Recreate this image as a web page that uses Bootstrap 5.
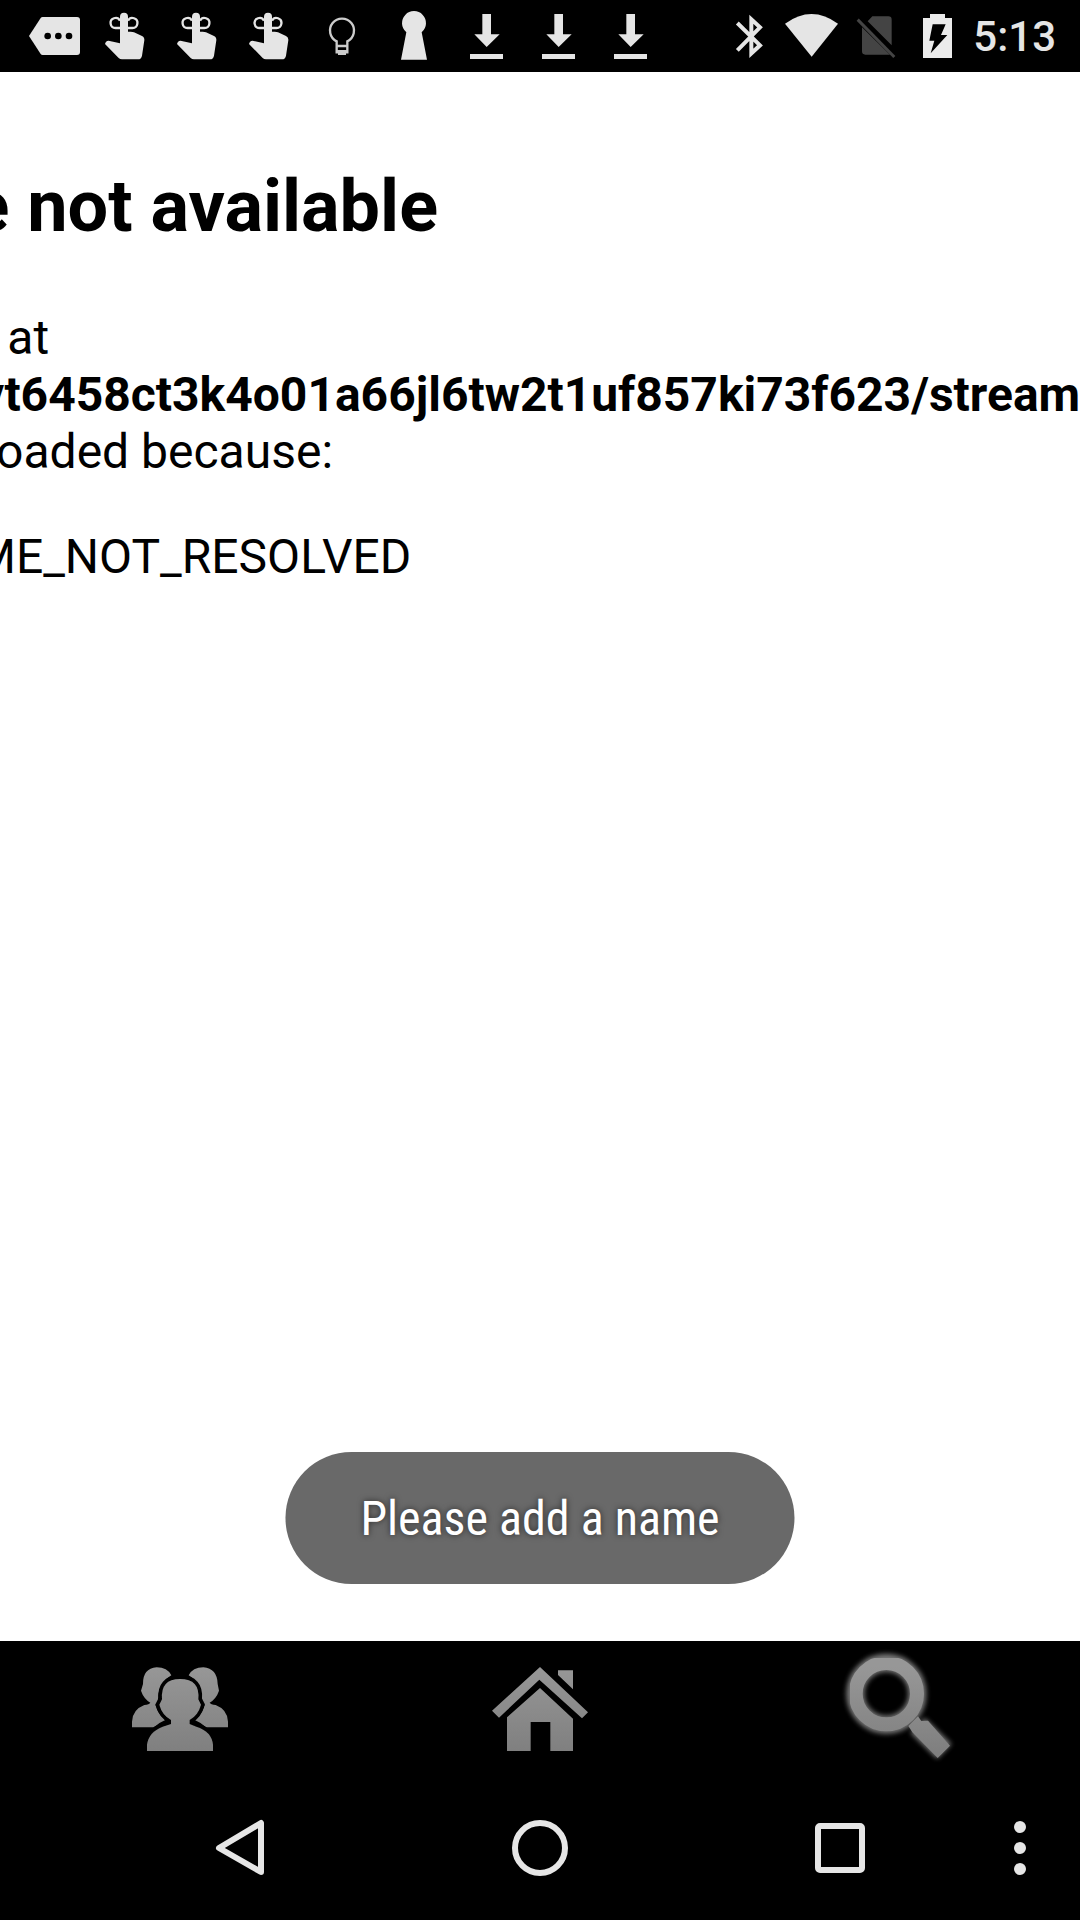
<!DOCTYPE html>
<html lang="en">
<head>
<meta charset="utf-8">
<meta name="viewport" content="width=device-width, initial-scale=1">
<title>Webpage not available</title>
<link href="https://cdn.jsdelivr.net/npm/bootstrap@5.3.0/dist/css/bootstrap.min.css" rel="stylesheet">
<style>
body { font-family: Roboto, sans-serif; color: #000; background: #fff; }
svg { display: block; flex: none; }
.status-bar { height: 72px; padding: 0 24px 0 18px; color: #e5e5e5; }
.status-time { font-size: 42px; line-height: 72px; padding-top: 2px; font-weight: 500; margin-left: 6px; }
.web-view { padding-top: 93px; }
/* the page is panned sideways, so its start lies left of the window */
.web-page { margin-left: -291px; white-space: nowrap; font-size: 48px; line-height: 57px; }
.web-page h1 { font-size: 72px; line-height: 84px; font-weight: 700; margin: 0 0 60px; }
.web-page p { margin: 0 0 48px; }
.toast-pill { bottom: 57px; height: 132px; padding: 2px 75px 0; background: #696969; font-family: "Roboto Condensed", Roboto, sans-serif; font-size: 48px; text-shadow: 0 0 6px rgba(0,0,0,.6); }
.tab-strip { height: 135px; }
.key-strip { height: 144px; color: #e6e6e6; padding: 0 30px 0 90px; }
.key-strip .key { flex: 1 1 0; }
.key-strip .key-menu { width: 60px; }
</style>
</head>
<body>
<svg width="0" height="0" class="position-absolute" aria-hidden="true">
  <defs>
    <linearGradient id="steel" gradientUnits="userSpaceOnUse" x1="0" y1="110" x2="0" y2="370"><stop offset="0" stop-color="#979797"/><stop offset="1" stop-color="#7f7f7f"/></linearGradient>
    <filter id="glow" x="-20%" y="-20%" width="140%" height="140%"><feGaussianBlur stdDeviation="8"/></filter>
    <filter id="soft" x="-5%" y="-5%" width="110%" height="110%"><feGaussianBlur stdDeviation="1.5"/></filter>
    <symbol id="touch" viewBox="0 0 216 216">
      <path fill="currentColor" d="M90 130V50q0-12 12-12t12 12v45h8q6 0 10 2l24 11q8 4 7 13l-7 46q-2 11-12 11H96q-6 0-10-4l-41-42q4-12 14-9z"/>
      <g fill="none" stroke="currentColor" stroke-width="7"><path d="M90 84H77a15 15 0 1 1 13-22M114 84h13a15 15 0 1 0-13-22"/></g>
    </symbol>
    <symbol id="download" viewBox="0 0 216 216">
      <path fill="currentColor" d="M97 42h26v61h26l-39 38-37-38h24zM60 162h99v15H60z"/>
    </symbol>
  </defs>
</svg>
<div class="d-flex flex-column min-vh-100">
  <header class="status-bar bg-black d-flex align-items-center">
    <svg width="72" height="72" viewBox="54 0 216 216"><path fill="currentColor" d="M122 54q2-3 6-3h103q9 0 9 9v96q0 9-9 9H128q-4 0-6-3L87 108z"/><g fill="#000"><circle cx="143" cy="108" r="10"/><circle cx="175" cy="108" r="10"/><circle cx="207" cy="108" r="10"/></g></svg>
    <svg width="72" height="72"><use href="#touch"/></svg>
    <svg width="72" height="72"><use href="#touch"/></svg>
    <svg width="72" height="72"><use href="#touch"/></svg>
    <svg width="72" height="72" viewBox="918 0 216 216"><path fill="none" stroke="#ccc" stroke-width="7" d="M1010 157v-33a36 36 0 1 1 32 0v33zM1010 138h32"/><path fill="#ccc" d="M1008 150h36v8h-6v7h-24v-7h-6z"/></svg>
    <svg width="72" height="72" viewBox="54 0 216 216"><path fill="currentColor" d="M139 97a36 36 0 1 1 46 0l16 82h-78z"/></svg>
    <svg width="72" height="72"><use href="#download"/></svg>
    <svg width="72" height="72"><use href="#download"/></svg>
    <svg width="72" height="72"><use href="#download"/></svg>
    <svg class="ms-auto" width="43" height="72" viewBox="30 0 129 216"><path fill="none" stroke="currentColor" stroke-width="12" d="M52 69l68 67-26 24V58l26 24-68 69"/></svg>
    <svg width="75" height="72" viewBox="159 0 225 216"><path fill="currentColor" d="M195 71q80-58 159 0l-79 99z"/></svg>
    <svg width="59" height="72" viewBox="384 0 177 216"><path fill="#444" d="M443 64l14-15h48q10 0 10 10v77zM426 82l84 82h-74q-10 0-10-10z"/><path stroke="#444" stroke-width="9" d="M413 59l110 112"/></svg>
    <svg width="60" height="72" viewBox="561 0 180 216"><path fill="#ebebeb" d="M609 54h21V42h45v12h21v120h-87z"/><path fill="#000" d="M638 73h39l-14 32h19l-50 55 11-38h-15z"/></svg>
    <time class="status-time">5:13</time>
  </header>

  <main class="web-view flex-grow-1 position-relative overflow-hidden">
    <article class="web-page">
      <h1>Webpage not available</h1>
      <p>The webpage at<br><strong>http://www.zvt6458ct3k4o01a66jl6tw2t1uf857ki73f623/stream</strong><br>could not be loaded because:</p>
      <p>net::ERR_NAME_NOT_RESOLVED</p>
    </article>
    <div class="toast-pill position-absolute start-50 translate-middle-x rounded-pill text-white text-nowrap d-flex align-items-center" role="status">Please add a name</div>
  </main>

  <nav class="tab-strip bg-black d-flex" aria-label="Sections">
    <a href="#people" class="flex-fill d-flex justify-content-center" aria-label="People">
      <svg width="140" height="135" viewBox="0 33 420 405"><g filter="url(#soft)"><g fill="url(#steel)"><path d="M184 136q-12-24-44-24-42 4-41 50l-6 20q8 24 28 36-3 5-18 7-36 14-37 50v17h66q14-14 34-22l-5-6q-17-13-25-40l9-8q-5-52 39-80z"/><path d="M236 136q12-24 44-24 42 4 43 50l4 20q-8 24-28 36 3 5 18 7 36 14 37 50v17h-66q-14-14-34-22l5-6q17-13 25-40l-9-8q5-52-39-80z"/></g><path fill="url(#steel)" stroke="#000" stroke-width="22" paint-order="stroke" d="M156 208q-5-61 54-61 61 0 55 61l8 16q-8 31-34 46v12l20 8q46 14 50 54v19H111v-19q5-38 47-54l25-8v-12q-27-15-35-46z"/></g></svg>
    </a>
    <a href="#home" class="flex-fill d-flex justify-content-center" aria-label="Home">
      <svg width="140" height="135" viewBox="0 33 420 405"><path filter="url(#soft)" fill="url(#steel)" d="M66 242L210 111 354 247 336 265 208 149 87 263zM264 121h45v57l-45-43zM111 262l99-88 99 92v97h-68v-87h-59v87h-71z"/></svg>
    </a>
    <a href="#search" class="flex-fill d-flex justify-content-center" aria-label="Search">
      <svg width="140" height="135" viewBox="0 33 420 405"><g filter="url(#glow)" opacity=".8" stroke="#999" fill="none"><circle cx="169" cy="191" r="93" stroke-width="54"/><path stroke-width="62" d="M263 286l80 78"/></g><g filter="url(#soft)"><circle cx="169" cy="191" r="92" fill="none" stroke="url(#steel)" stroke-width="42"/><path fill="url(#steel)" d="M235 288l29-29 10 14 20-1 66 75-37 37-76-77z"/></g></svg>
    </a>
  </nav>

  <footer class="key-strip bg-black d-flex align-items-center">
    <button type="button" class="key btn border-0 p-0 text-reset d-flex justify-content-center" aria-label="Back"><svg width="60" height="60" viewBox="0 0 60 60"><path fill="none" stroke="currentColor" stroke-width="6" stroke-linejoin="round" d="M51 5v49L9 30z"/></svg></button>
    <button type="button" class="key btn border-0 p-0 text-reset d-flex justify-content-center" aria-label="Home screen"><svg width="60" height="60" viewBox="0 0 60 60"><circle cx="30" cy="30" r="25" fill="none" stroke="currentColor" stroke-width="6"/></svg></button>
    <button type="button" class="key btn border-0 p-0 text-reset d-flex justify-content-center" aria-label="Recent apps"><svg width="60" height="60" viewBox="0 0 60 60"><rect x="8" y="8" width="44" height="44" rx="2" fill="none" stroke="currentColor" stroke-width="6"/></svg></button>
    <button type="button" class="key-menu btn border-0 p-0 text-reset d-flex justify-content-center" aria-label="Menu"><svg width="60" height="60" viewBox="0 0 60 60"><g fill="currentColor"><circle cx="30" cy="9" r="6"/><circle cx="30" cy="30" r="6"/><circle cx="30" cy="51" r="6"/></g></svg></button>
  </footer>
</div>
<script src="https://cdn.jsdelivr.net/npm/bootstrap@5.3.0/dist/js/bootstrap.bundle.min.js"></script>
</body>
</html>
